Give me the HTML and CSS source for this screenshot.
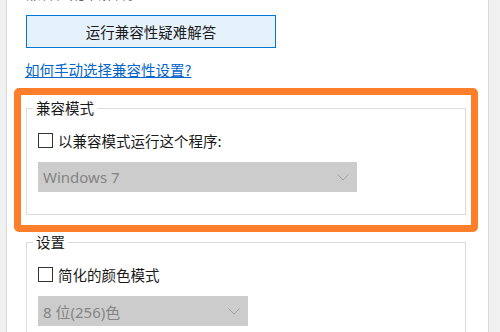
FILE: index.html
```html
<!DOCTYPE html>
<html lang="zh-CN">
<head>
    <meta charset="UTF-8">
    <meta name="viewport" content="width=device-width, initial-scale=1.0">
    <title>兼容性</title>
    <link rel="stylesheet" href="styles.css">
</head>
<body>

    <div class="panel">
        <p class="intro">兼容性疑难解答。</p>
        <button class="trouble-btn">运行兼容性疑难解答</button>
        <a class="help-link" href="#">如何手动选择兼容性设置?</a>

        <!-- 橙色框标注 -->
        <div class="highlight">
            <fieldset class="group">
                <legend>兼容模式</legend>
                <label class="check"><span class="box"></span>以兼容模式运行这个程序:</label>
                <div class="select select-wide">
                    <span>Windows 7</span>
                    <svg width="12" height="7" viewBox="0 0 12 7"><path d="M0.5 0.5 L6 6 L11.5 0.5" fill="none" stroke="#a2a2a2" stroke-width="1"/></svg>
                </div>
            </fieldset>
        </div>

        <fieldset class="group">
            <legend>设置</legend>
            <label class="check"><span class="box"></span>简化的颜色模式</label>
            <div class="select select-narrow">
                <span>8 位(256)色</span>
                <svg width="12" height="7" viewBox="0 0 12 7"><path d="M0.5 0.5 L6 6 L11.5 0.5" fill="none" stroke="#a2a2a2" stroke-width="1"/></svg>
            </div>
        </fieldset>
    </div>

</body>
</html>
```

FILE: styles.css
```css
body {
    margin: 0;
    background-color: #f0f0f0;
    font-family: "Noto Sans CJK SC", sans-serif;
    font-size: 14.5px;
    color: #1a1a1a;
}
.panel {
    margin-left: 6px;
    width: 462px;
    height: 332px;
    padding-left: 19px;
    background-color: #fff;
    border-left: 1px solid #d9d9d9;
    border-right: 1px solid #d9d9d9;
    overflow: hidden;
}
.intro {
    margin: -17px 0 0;
    line-height: 20px;
    color: #666;
}
.trouble-btn {
    display: block;
    margin-top: 12px;
    width: 250px;
    height: 33px;
    border: 1px solid #0078d7;
    background-color: #e5f1fb;
    font-family: inherit;
    font-size: 14.5px;
    color: #1a1a1a;
    padding: 0;
}
.help-link {
    display: inline-block;
    margin-top: 12px;
    margin-left: -1px;
    line-height: 20px;
    color: #0066cc;
}
.highlight {
    margin-top: 8px;
    margin-left: -12px;
    width: 440px;
    padding: 3px 5px 10px;
    border: 7px solid #fd7f2c;
    border-radius: 5px;
}
.group {
    box-sizing: border-box;
    width: 440px;
    min-width: 0;
    margin: 0;
    padding: 12px 12px 22px;
    border: 1px solid #dcdcdc;
}
.group legend {
    margin-left: -6px;
    padding: 0 3px;
    line-height: 20px;
}
.check {
    display: flex;
    align-items: center;
    height: 20px;
    margin-left: -1px;
}
.box {
    box-sizing: border-box;
    width: 15px;
    height: 15px;
    margin-right: 5px;
    border: 1px solid #333;
    background-color: #fff;
}
.select {
    box-sizing: border-box;
    display: flex;
    align-items: center;
    justify-content: space-between;
    height: 30px;
    margin-top: 12px;
    margin-left: -1px;
    padding: 0 8px 0 5px;
    background-color: #cccccc;
    color: #848484;
    font-family: "Noto Sans", "Noto Sans CJK SC", sans-serif;
    font-size: 15px;
}
.select-wide {
    width: 319px;
}
.select-narrow {
    width: 210px;
}
```
